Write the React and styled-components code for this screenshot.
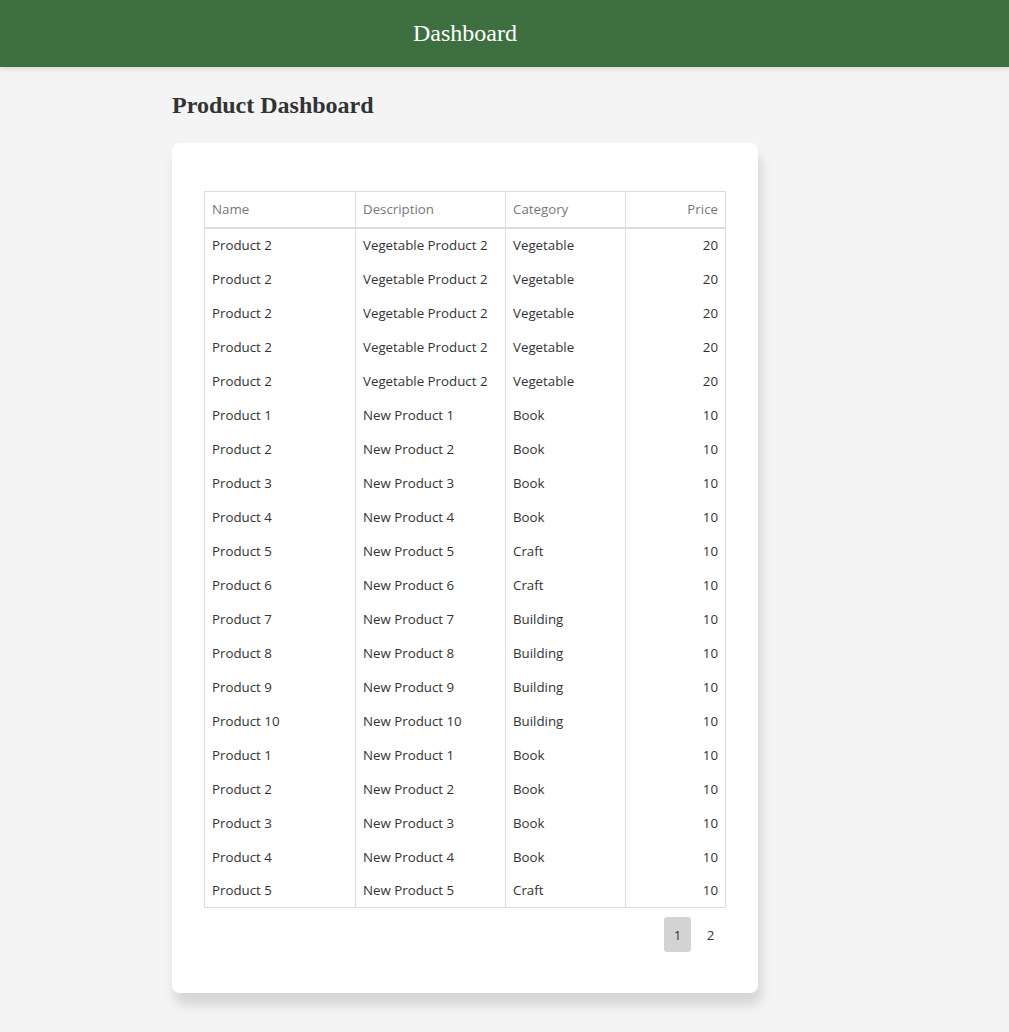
import React from "react";
import styled, { createGlobalStyle } from "styled-components";

const Global = createGlobalStyle`
  * { box-sizing: border-box; }
  html, body { margin: 0; padding: 0; }
  body {
    background: #f4f4f4;
    font-family: "Liberation Serif", "Times New Roman", serif;
    color: #333;
  }
`;

const Header = styled.header`
  height: 67px;
  background: #3e6f40;
  box-shadow: 0 2px 4px rgba(0, 0, 0, 0.12);
  display: flex;
  align-items: center;
  padding-left: 172px;
  padding-bottom: 2px;
`;

const HeaderTitle = styled.div`
  width: 586px;
  text-align: center;
  color: #fff;
  font-size: 24px;
  line-height: 1;
`;

const Main = styled.main`
  width: 586px;
  margin-left: 172px;
  padding-bottom: 40px;
`;

const Title = styled.h2`
  font-size: 24px;
  font-weight: bold;
  margin: 24px 0 24px;
  line-height: 28px;
  color: #333;
`;

const Card = styled.section`
  background: #fff;
  border-radius: 8px;
  padding: 48px 32px 41px;
  box-shadow: 3px 12px 12px rgba(0, 0, 0, 0.13);
  font-family: "Open Sans", "Noto Sans", sans-serif;
  font-size: 13.3px;
`;

const Table = styled.table`
  width: 100%;
  border-collapse: collapse;
  border: 1px solid #ddd;
  table-layout: fixed;
`;

const Th = styled.th`
  font-weight: normal;
  color: #777;
  text-align: ${(p) => (p.$right ? "right" : "left")};
  padding: 0 7px 1px;
  height: 36px;
  border-left: 1px solid #ddd;
  border-bottom: 2px solid #ddd;
  width: ${(p) => p.$w}px;
`;

const Td = styled.td`
  color: #333;
  text-align: ${(p) => (p.$right ? "right" : "left")};
  padding: 0 7px;
  height: 34px;
  border-left: 1px solid #ddd;
  white-space: nowrap;
`;

const Pager = styled.div`
  display: flex;
  justify-content: flex-end;
  gap: 6px;
  margin-top: 9px;
  padding-right: 2px;
`;

const PageButton = styled.button`
  width: 27px;
  height: 35px;
  border: none;
  border-radius: 3px;
  background: ${(p) => (p.$active ? "#d3d3d3" : "transparent")};
  color: #333;
  font-family: "Open Sans", "Noto Sans", sans-serif;
  font-size: 13.3px;
  padding: 0;
  cursor: pointer;
`;

const rows = [
  ...Array.from({ length: 5 }, () => ["Product 2", "Vegetable Product 2", "Vegetable", 20]),
  ["Product 1", "New Product 1", "Book", 10],
  ["Product 2", "New Product 2", "Book", 10],
  ["Product 3", "New Product 3", "Book", 10],
  ["Product 4", "New Product 4", "Book", 10],
  ["Product 5", "New Product 5", "Craft", 10],
  ["Product 6", "New Product 6", "Craft", 10],
  ["Product 7", "New Product 7", "Building", 10],
  ["Product 8", "New Product 8", "Building", 10],
  ["Product 9", "New Product 9", "Building", 10],
  ["Product 10", "New Product 10", "Building", 10],
  ["Product 1", "New Product 1", "Book", 10],
  ["Product 2", "New Product 2", "Book", 10],
  ["Product 3", "New Product 3", "Book", 10],
  ["Product 4", "New Product 4", "Book", 10],
  ["Product 5", "New Product 5", "Craft", 10],
];

export default function App() {
  return (
    <>
      <Global />
      <Header>
        <HeaderTitle>Dashboard</HeaderTitle>
      </Header>
      <Main>
        <Title>Product Dashboard</Title>
        <Card>
          <Table>
            <thead>
              <tr>
                <Th $w={151}>Name</Th>
                <Th $w={150}>Description</Th>
                <Th $w={120}>Category</Th>
                <Th $right>Price</Th>
              </tr>
            </thead>
            <tbody>
              {rows.map((r, i) => (
                <tr key={i}>
                  <Td>{r[0]}</Td>
                  <Td>{r[1]}</Td>
                  <Td>{r[2]}</Td>
                  <Td $right>{r[3]}</Td>
                </tr>
              ))}
            </tbody>
          </Table>
          <Pager>
            <PageButton $active>1</PageButton>
            <PageButton>2</PageButton>
          </Pager>
        </Card>
      </Main>
    </>
  );
}
